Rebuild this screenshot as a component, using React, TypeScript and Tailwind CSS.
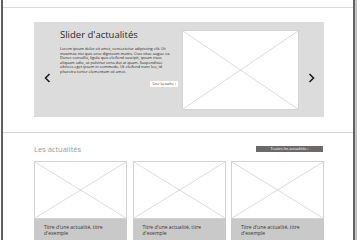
import React from "react";

const font = { fontFamily: '"Open Sans", "Liberation Sans", sans-serif' };

const lorem = [
  "Lorem ipsum dolor sit amet, consectetur adipiscing elit. Ut",
  "maximus nisi quis arcu dignissim mattis. Cras vitae augue ex.",
  "Donec convallis, ligula quis eleifend suscipit, ipsum risus",
  "aliquam odio, ut pulvinar urna dui at quam. Suspendisse",
  "ultrices eget ipsum in commodo. Ut eleifend nunc leo, id",
  "pharetra tortor elementum sit amet.",
];

function Placeholder({ className }: { className: string }) {
  return (
    <div className={`relative bg-white border border-[#d4d4d4] ${className}`}>
      <svg className="absolute inset-0 h-full w-full" preserveAspectRatio="none" viewBox="0 0 100 100">
        <line x1="0" y1="0" x2="100" y2="100" stroke="#d2d2d2" strokeWidth="0.8" vectorEffect="non-scaling-stroke" />
        <line x1="100" y1="0" x2="0" y2="100" stroke="#d2d2d2" strokeWidth="0.8" vectorEffect="non-scaling-stroke" />
      </svg>
    </div>
  );
}

function Chevron({ dir }: { dir: "left" | "right" }) {
  return (
    <svg width="7" height="10" viewBox="0 0 7 10">
      <path
        d={dir === "left" ? "M5.5 1 L1.5 5 L5.5 9" : "M1.5 1 L5.5 5 L1.5 9"}
        fill="none"
        stroke="#1e1e1e"
        strokeWidth="1.6"
      />
    </svg>
  );
}

function NewsCard() {
  return (
    <div className="flex w-[93px] flex-col">
      <Placeholder className="h-[58px] w-full shrink-0" />
      <div className="h-[30px] shrink-0 bg-[#c9c9c9] px-[10px] pt-[5px] text-[5px] leading-[6px] text-[#333]">
        Titre d'une actualité, titre
        <br />
        d'exemple
      </div>
    </div>
  );
}

export default function App() {
  return (
    <div className="flex h-[240px] w-[360px] overflow-hidden bg-white" style={font}>
      <div className="w-[1px] shrink-0" />
      <div className="w-[2px] shrink-0 bg-[#5f5f5f]" />
      <main className="flex w-[350px] shrink-0 flex-col">
        <div className="h-[8px] shrink-0 border-b border-[#d9d9d9]" />

        <section className="ml-[31px] mt-[14px] flex h-[95px] w-[290px] shrink-0 bg-[#dcdcdc]">
          <div className="flex w-[26px] justify-center pt-[51px]">
            <Chevron dir="left" />
          </div>
          <div className="flex w-[118px] flex-col">
            <h1 className="mt-[7px] text-[9.5px] leading-[12px] text-[#2a2a2a]">Slider d'actualités</h1>
            <p className="mt-[6px] whitespace-nowrap text-[3.9px] font-medium leading-[4.5px] text-[#222]">
              {lorem.map((line) => (
                <span key={line} className="block">
                  {line}
                </span>
              ))}
            </p>
            <div className="mt-[7px] flex justify-end">
              <span className="bg-white px-[2px] text-[4px] leading-[6px] text-[#333]">Lire la suite ›</span>
            </div>
          </div>
          <div className="ml-[4px] pt-[8px]">
            <Placeholder className="h-[80px] w-[117px]" />
          </div>
          <div className="flex flex-1 justify-center pt-[51px]">
            <Chevron dir="right" />
          </div>
        </section>

        <div className="mt-[15px] shrink-0 border-t border-[#d4d4d4]" />

        <div className="ml-[31px] mt-[11px] flex w-[290px] shrink-0 items-center justify-between">
          <h2 className="text-[7.5px] leading-[10px] text-[#9a9a9a]">Les actualités</h2>
          <span className="mr-[1px] w-[67px] bg-[#6a6a6a] text-center text-[3.8px] leading-[6px] text-white">
            Toutes les actualités ›
          </span>
        </div>

        <div className="ml-[31px] mt-[7px] flex w-[290px] shrink-0 justify-between">
          <NewsCard />
          <NewsCard />
          <NewsCard />
        </div>
      </main>
      <div className="w-[2px] shrink-0 bg-[#646464]" />
      <div className="w-[2px] shrink-0 bg-[#c4c4c4]" />
      <div className="flex-1 bg-white" />
    </div>
  );
}
